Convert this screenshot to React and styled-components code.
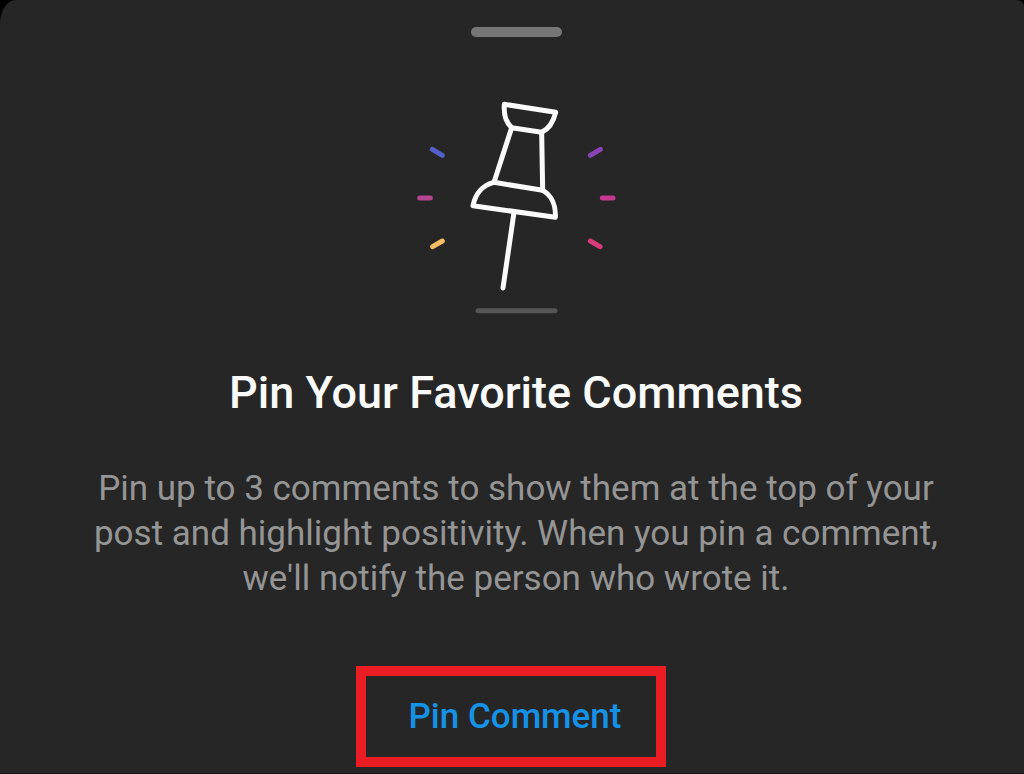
import React from "react";
import styled, { createGlobalStyle } from "styled-components";

const GlobalStyle = createGlobalStyle`
  * {
    box-sizing: border-box;
  }

  body {
    margin: 0;
    background-color: #000;
    font-family: Roboto, sans-serif;
  }
`;

const Sheet = styled.main`
  display: flex;
  flex-direction: column;
  align-items: center;
  min-height: 100vh;
  padding: 27px 72px 6px 80px;
  background-color: #262626;
  border-bottom: 1px solid #141414;
  border-radius: 16px 8px 0 0 / 24px 6px 0 0;
`;

const Handle = styled.div`
  width: 91px;
  height: 10px;
  border-radius: 5px;
  background-color: #767676;
`;

const Illustration = styled.svg`
  width: 240px;
  height: 250px;
  margin-top: 43px;
  fill: none;
  stroke-linecap: round;
  stroke-linejoin: round;
`;

const Title = styled.h1`
  margin: 37px 0 0;
  color: #fafafa;
  font-size: 45px;
  font-weight: 500;
  line-height: 52px;
  text-align: center;
`;

const Description = styled.p`
  max-width: 872px;
  margin: 47px 0 0;
  color: #959595;
  font-size: 35px;
  line-height: 45px;
  text-align: center;
`;

const Highlight = styled.div`
  display: flex;
  margin: 65px 10px 0 0;
  border: 10px solid #ea1d24;
`;

const PinButton = styled.button`
  padding: 20px 34px 19px 42px;
  border: 0;
  background: none;
  color: #1592e6;
  font-family: inherit;
  font-size: 35px;
  font-weight: 500;
  line-height: 42px;
  cursor: pointer;
`;

const PinIllustration = () => (
  <Illustration viewBox="-12 0 720 750" aria-hidden="true">
    <g stroke="#fafafa" strokeWidth="15">
      <path d="M313 73 467 97C461 122 448 146 425 157L335 143C317 127 311 101 313 73Z" />
      <path d="M335 143 282 307M425 157 428 331" />
      <path d="M219 377C226 341 249 315 282 307L428 331C455 346 468 377 466 412Z" />
      <path d="M342 397 309 624" />
    </g>
    <g strokeWidth="15">
      <path stroke="#5460c8" d="M97 208 127 226" />
      <path stroke="#b5458f" d="M59 354H91" />
      <path stroke="#f5bd64" d="M98 500 127 483" />
      <path stroke="#8a43b5" d="M571 226 601 208" />
      <path stroke="#c73a91" d="M607 354H639" />
      <path stroke="#d93a7a" d="M571 483 600 500" />
      <path stroke="#555" d="M234 692H465" />
    </g>
  </Illustration>
);

const App = () => {
  return (
    <>
      <GlobalStyle />
      <Sheet>
        <Handle />
        <PinIllustration />
        <Title>Pin Your Favorite Comments</Title>
        <Description>
          Pin up to 3 comments to show them at the top of your post and
          highlight positivity. When you pin a comment, we'll notify the person
          who wrote it.
        </Description>
        <Highlight>
          <PinButton type="button">Pin Comment</PinButton>
        </Highlight>
      </Sheet>
    </>
  );
};

export default App;
